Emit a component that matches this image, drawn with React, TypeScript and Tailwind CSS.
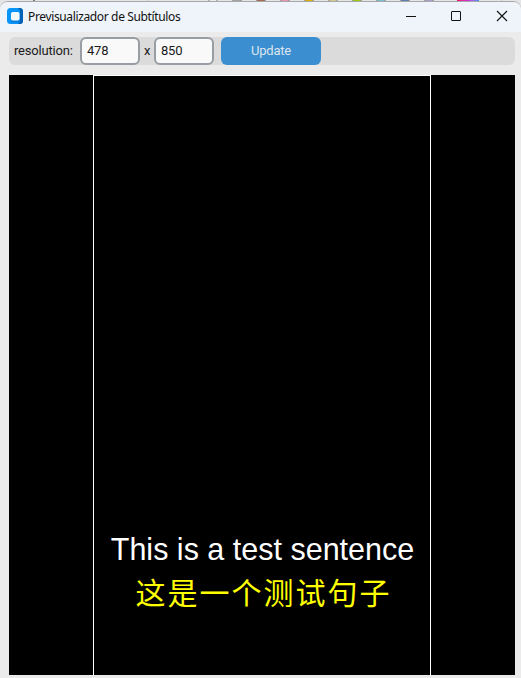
import React from "react";

const swatches = [
  { left: "left-[207px]", color: "bg-[#e8ecee]" },
  { left: "left-[231px]", color: "bg-[#a3a3a3]" },
  { left: "left-[255px]", color: "bg-[#a9694c]" },
  { left: "left-[279px]", color: "bg-[#ee93b4]" },
  { left: "left-[303px]", color: "bg-[#deb000]" },
  { left: "left-[327px]", color: "bg-[#d3c991]" },
  { left: "left-[351px]", color: "bg-[#9bcf0c]" },
  { left: "left-[375px]", color: "bg-[#7cbfd0]" },
  { left: "left-[399px]", color: "bg-[#587fae]" },
  { left: "left-[423px]", color: "bg-[#aba0cb]" },
];

function Backdrop() {
  return (
    <div className="absolute inset-x-0 top-0 h-3 overflow-hidden bg-[#e4e5e6]">
      <div className="absolute left-[33px] top-0 h-2 w-[2px] bg-[#777]" />
      <div className="absolute left-[148px] top-0 h-2 w-px bg-[#ccc]" />
      <div className="absolute left-[501px] top-0 h-2 w-px bg-[#ccc]" />
      {swatches.map((s) => (
        <div
          key={s.left}
          className={`absolute -top-[9px] size-3 rounded-full border border-[#888] ${s.left} ${s.color}`}
        />
      ))}
      <div className="absolute left-[457px] top-0 h-2 w-[22px] bg-linear-to-r from-[#ff0064] via-[#d02bd8] to-[#0090ff]" />
    </div>
  );
}

function AppIcon() {
  return (
    <svg width="16" height="16" viewBox="0 0 16 16" className="relative -top-px">
      <rect width="16" height="16" rx="3.5" fill="#0795fa" />
      <path d="M11 0h1.5A3.5 3.5 0 0 1 16 3.5v9a3.5 3.5 0 0 1-3.5 3.5H11l2-3V3z" fill="#0661b4" />
      <path d="M4.5 12l-1 2.5h8L13 12z" fill="#087fdc" />
      <rect x="4" y="4" width="8.5" height="8.5" rx="1.8" fill="#f5fafe" />
    </svg>
  );
}

function TitleBar() {
  return (
    <header className="flex h-[30px] shrink-0 items-center bg-[#eef4f9] pl-[7px]">
      <AppIcon />
      <h1 className="ml-[5px] grow text-[12px] leading-4 tracking-[-0.36px] whitespace-nowrap text-[#111] [font-family:'Noto_Sans',sans-serif]">
        Previsualizador de Subtítulos
      </h1>
      <svg width="115" height="30" viewBox="406 2 115 30" fill="none" stroke="#111" strokeWidth="1">
        <path d="M406 16.5h10" />
        <rect x="451.5" y="11.5" width="9" height="9" rx="0.5" />
        <path d="M497 11l10 10M507 11l-10 10" strokeWidth="1.1" />
      </svg>
    </header>
  );
}

function SizeField({ value }: { value: string }) {
  return (
    <input
      readOnly
      value={value}
      className="h-7 w-[60px] rounded-md border-2 border-[#979da2] bg-[#f9f9fa] px-[5px] pb-px text-[13px] tracking-[-0.2px] text-[#1a1a1a] outline-none"
    />
  );
}

function Toolbar() {
  return (
    <div className="flex h-7 shrink-0 items-center rounded-md bg-[#dbdbdb] pl-[5px] text-[13px] tracking-[-0.2px] text-[#1a1a1a] [font-family:Roboto,sans-serif]">
      <span className="w-[66px] whitespace-nowrap">resolution:</span>
      <SizeField value="478" />
      <span className="w-[14px] text-center">x</span>
      <SizeField value="850" />
      <button className="ml-[7px] h-7 w-[100px] rounded-md bg-[#3b8ed0] tracking-[-0.2px] text-[#dce4ee]">
        Update
      </button>
    </div>
  );
}

function Preview() {
  return (
    <main className="mt-[10px] flex h-[600px] shrink-0 justify-center bg-black">
      <div className="flex w-[338px] flex-col items-center border-x border-t border-white pt-[455px]">
        <p className="h-[40px] pl-px text-[30.5px] leading-[36px] whitespace-nowrap text-white [font-family:'Liberation_Sans',Arial,sans-serif]">
          This is a test sentence
        </p>
        <p className="pl-[3px] text-[30px] leading-[40px] tracking-[2px] whitespace-nowrap text-[#ffff00] [font-family:KaiTi,STKaiti,'Noto_Sans_CJK_SC',sans-serif]">
          这是一个测试句子
        </p>
      </div>
    </main>
  );
}

export default function App() {
  return (
    <div className="relative h-[678px] w-[521px] overflow-hidden pt-px">
      <Backdrop />
      <section className="relative flex h-[677px] flex-col overflow-hidden rounded-t-lg border-t border-[#a8a8a8] bg-[#ebebeb]">
        <TitleBar />
        <div className="flex flex-col pt-[5px] pr-[6px] pl-[9px]">
          <Toolbar />
          <Preview />
        </div>
      </section>
    </div>
  );
}
